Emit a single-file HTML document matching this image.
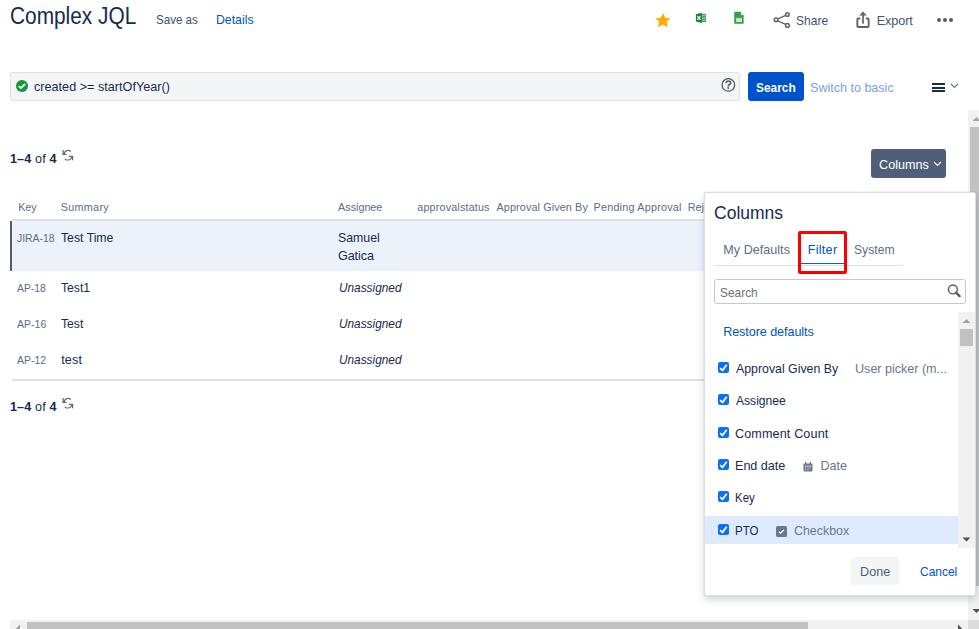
<!DOCTYPE html>
<html><head><meta charset="utf-8">
<style>
html,body{margin:0;padding:0;width:979px;height:629px;overflow:hidden;background:#fff;}
body{position:relative;font-family:"Liberation Sans",sans-serif;color:#172b4d;}
.a{position:absolute;}
.t{position:absolute;white-space:nowrap;}
svg{position:absolute;overflow:visible;}
</style></head><body>

<!-- ===== Header ===== -->

<!-- star -->
<svg style="left:655px;top:13px" width="16" height="15" viewBox="0 0 16 15"><path d="M8 0.8 L10.1 5.2 L14.9 5.6 L11.3 8.8 L12.4 13.6 L8 11.1 L3.6 13.6 L4.7 8.8 L1.1 5.6 L5.9 5.2 Z" fill="#ffab00" stroke="#ffab00" stroke-width="0.8" stroke-linejoin="round"/></svg>
<!-- excel -->
<svg style="left:690px;top:8px" width="22" height="20" viewBox="0 0 22 20"><rect x="11.6" y="5.9" width="4.4" height="8.2" fill="#3ea64c"/><rect x="12" y="7.2" width="3.5" height="0.9" fill="#b9e0bd"/><rect x="12" y="9.2" width="3.5" height="1.5" fill="#a5d6aa"/><rect x="12" y="11.8" width="3.5" height="0.9" fill="#b9e0bd"/><rect x="13.6" y="7" width="0.5" height="6" fill="#3ea64c"/><path d="M5.9 6.2 L11.9 4.8 L11.9 15 L5.9 13.6 Z" fill="#1f7d36"/><path d="M7.3 8.2 L10.4 11.8 M10.4 8.2 L7.3 11.8" stroke="#fff" stroke-width="1.2"/></svg>
<!-- sheets -->
<svg style="left:728px;top:8px" width="22" height="20" viewBox="0 0 22 20"><path d="M6.2 4.5 Q6.2 3.8 7 3.8 H12.4 L15.7 7.2 V15 Q15.7 15.7 15 15.7 H7 Q6.2 15.7 6.2 15 Z" fill="#34a04a"/><path d="M12.9 4.6 L15.1 6.9 L13.4 7.2 Q12.9 7.2 12.9 6.6 Z" fill="#e9f5eb"/><rect x="8.1" y="9.9" width="5.9" height="4.1" fill="#cde8d2"/><rect x="9.4" y="9.9" width="0.8" height="1.2" fill="#6fbb7d"/><rect x="11.8" y="9.9" width="0.8" height="1.2" fill="#6fbb7d"/></svg>

<!-- share -->
<svg style="left:774px;top:12px" width="17" height="17" viewBox="0 0 17 17"><circle cx="13.4" cy="2.5" r="1.85" fill="none" stroke="#646464" stroke-width="1.5"/><circle cx="2.1" cy="7.8" r="1.85" fill="none" stroke="#646464" stroke-width="1.5"/><circle cx="13.4" cy="13.4" r="1.85" fill="none" stroke="#646464" stroke-width="1.5"/><path d="M3.8 6.9 L11.7 3.4 M3.8 8.8 L11.7 12.4" stroke="#646464" stroke-width="1.4"/></svg>
<!-- export -->
<svg style="left:856px;top:11px" width="15" height="18" viewBox="0 0 15 18"><path d="M4.2 7.55 H2.35 Q1.35 7.55 1.35 8.55 V15 Q1.35 15.95 2.35 15.95 H11.65 Q12.65 15.95 12.65 15 V8.55 Q12.65 7.55 11.65 7.55 H9.9" fill="none" stroke="#646464" stroke-width="1.9"/><path d="M7 0.6 L10.9 4.6 H3.1 Z" fill="#646464"/><path d="M7 4 V12.8" stroke="#646464" stroke-width="1.7"/></svg>
<!-- dots -->
<svg style="left:936px;top:17px" width="18" height="6" viewBox="0 0 18 6"><circle cx="3" cy="3" r="2" fill="#5c5c5c"/><circle cx="9" cy="3" r="2" fill="#5c5c5c"/><circle cx="15" cy="3" r="2" fill="#5c5c5c"/></svg>

<!-- ===== JQL bar ===== -->
<div class="a" style="left:10px;top:72px;width:728px;height:27px;border:1px solid #dfe1e6;border-radius:3px;background:#f4f5f7;"></div>
<svg style="left:16px;top:80px" width="12" height="12" viewBox="0 0 12 12"><circle cx="6" cy="6" r="6.05" fill="#12993b"/><path d="M2.7 6.1 L4.9 8.1 L9.1 4" fill="none" stroke="#fff" stroke-width="1.8"/></svg>
<svg style="left:721px;top:77px" width="15" height="15" viewBox="0 0 15 15"><circle cx="7.35" cy="7.9" r="6.3" fill="none" stroke="#555a63" stroke-width="1.3"/><path d="M5.2 6.2 Q5.2 4 7.4 4 Q9.6 4 9.6 5.9 Q9.6 7.2 7.6 8 Q7.3 8.2 7.3 9.4" fill="none" stroke="#555a63" stroke-width="1.6"/><rect x="6.45" y="10.2" width="1.7" height="1.7" fill="#555a63"/></svg>

<div class="a" style="left:748px;top:72px;width:56px;height:29px;border-radius:3px;background:#0052cc;"></div>
<div class="a" style="left:931.5px;top:83px;width:13px;height:2px;background:#172b4d;"></div>
<div class="a" style="left:931.5px;top:86.5px;width:13px;height:2px;background:#172b4d;"></div>
<div class="a" style="left:931.5px;top:90px;width:13px;height:2px;background:#172b4d;"></div>
<svg style="left:950px;top:83px" width="9" height="6" viewBox="0 0 9 6"><path d="M1 1 L4.5 4.5 L8 1" fill="none" stroke="#6b778c" stroke-width="1.2"/></svg>

<!-- ===== count & columns ===== -->
<svg style="left:58px;top:146px" width="20" height="20" viewBox="0 0 20 20"><path d="M5.1 4.1 V8.4 H8.6 M6.1 7.9 C6.6 4.4 10.6 3.4 12.8 5.6 M10.8 10.3 H14.6 V14.3 M14 10.6 C13.6 14 9.6 14.8 7 13.2" fill="none" stroke="#66686d" stroke-width="1.2"/></svg>

<div class="a" style="left:871px;top:149px;width:75px;height:29px;border-radius:3px;background:#505f79;"></div>
<svg style="left:933px;top:160.5px" width="9" height="6" viewBox="0 0 9 6"><path d="M1 1 L4.5 4.5 L8 1" fill="none" stroke="#fff" stroke-width="1.1"/></svg>

<!-- ===== table ===== -->
<div class="a" style="left:12px;top:219px;width:956px;height:2px;background:#dfe1e6;"></div>

<div class="a" style="left:12px;top:221px;width:956px;height:50px;background:#ebf2fa;"></div>
<div class="a" style="left:10px;top:221px;width:2px;height:50px;background:#5c5c5c;"></div>




<div class="a" style="left:12px;top:379px;width:956px;height:2px;background:#dfe1e6;"></div>

<svg style="left:58px;top:394px" width="20" height="20" viewBox="0 0 20 20"><path d="M5.1 4.1 V8.4 H8.6 M6.1 7.9 C6.6 4.4 10.6 3.4 12.8 5.6 M10.8 10.3 H14.6 V14.3 M14 10.6 C13.6 14 9.6 14.8 7 13.2" fill="none" stroke="#66686d" stroke-width="1.2"/></svg>

<div class="t" style="left:9.73px;top:5px;font-size:23px;line-height:23px;transform:scaleX(0.9062);transform-origin:0 0;color:#172b4d;">Complex JQL</div>
<div class="t" style="left:156.45px;top:14px;font-size:12.6px;line-height:12.6px;transform:scaleX(0.9195);transform-origin:0 0;color:#42526e;">Save as</div>
<div class="t" style="left:215.96px;top:14px;font-size:12.6px;line-height:12.6px;transform:scaleX(0.975);transform-origin:0 0;color:#0052cc;">Details</div>
<div class="t" style="left:795.82px;top:15px;font-size:12.6px;line-height:12.6px;transform:scaleX(0.9548);transform-origin:0 0;color:#42526e;">Share</div>
<div class="t" style="left:876.75px;top:15px;font-size:12.6px;line-height:12.6px;letter-spacing:-0.064px;color:#42526e;">Export</div>
<div class="t" style="left:33.97px;top:81px;font-size:12.6px;line-height:12.6px;letter-spacing:0.026px;color:#172b4d;">created &gt;= startOfYear()</div>
<div class="t" style="left:755.98px;top:82px;font-size:12.8px;line-height:12.8px;transform:scaleX(0.9306);transform-origin:0 0;color:#fff;font-weight:bold;">Search</div>
<div class="t" style="left:810.1px;top:82px;font-size:12.6px;line-height:12.6px;letter-spacing:-0.029px;color:#7aa2e3;">Switch to basic</div>
<div class="t" style="left:9.88px;top:153px;font-size:12.6px;line-height:12.6px;letter-spacing:0.155px;color:#172b4d;"><b>1–4</b> of <b>4</b></div>
<div class="t" style="left:879.11px;top:159px;font-size:12.6px;line-height:12.6px;letter-spacing:-0.015px;color:#fff;">Columns</div>
<div class="t" style="left:18.19px;top:202px;font-size:10.8px;line-height:10.8px;letter-spacing:-0.089px;color:#5e6c84;">Key</div>
<div class="t" style="left:60.66px;top:202px;font-size:10.8px;line-height:10.8px;letter-spacing:0.308px;color:#5e6c84;">Summary</div>
<div class="t" style="left:338.11px;top:202px;font-size:10.8px;line-height:10.8px;letter-spacing:-0.027px;color:#5e6c84;">Assignee</div>
<div class="t" style="left:417.29px;top:202px;font-size:10.8px;line-height:10.8px;letter-spacing:0.153px;color:#5e6c84;">approvalstatus</div>
<div class="t" style="left:496.5px;top:202px;font-size:10.8px;line-height:10.8px;letter-spacing:0.119px;color:#5e6c84;">Approval Given By</div>
<div class="t" style="left:593.54px;top:202px;font-size:10.8px;line-height:10.8px;letter-spacing:0.218px;color:#5e6c84;">Pending Approval</div>
<div class="t" style="left:687.72px;top:202px;font-size:10.8px;line-height:10.8px;color:#5e6c84;">Rejected</div>
<div class="t" style="left:17.1px;top:233px;font-size:10.8px;line-height:10.8px;transform:scaleX(0.9641);transform-origin:0 0;color:#5e6c84;">JIRA-18</div>
<div class="t" style="left:61.43px;top:232px;font-size:12.6px;line-height:12.6px;transform:scaleX(0.9719);transform-origin:0 0;color:#172b4d;">Test Time</div>
<div class="t" style="left:337.9px;top:232px;font-size:12.6px;line-height:12.6px;transform:scaleX(0.9791);transform-origin:0 0;color:#172b4d;">Samuel</div>
<div class="t" style="left:338.01px;top:250px;font-size:12.6px;line-height:12.6px;letter-spacing:-0.096px;color:#172b4d;">Gatica</div>
<div class="t" style="left:17.36px;top:283px;font-size:10.8px;line-height:10.8px;transform:scaleX(0.9609);transform-origin:0 0;color:#5e6c84;">AP-18</div>
<div class="t" style="left:61.33px;top:282px;font-size:12.6px;line-height:12.6px;transform:scaleX(0.9633);transform-origin:0 0;color:#172b4d;">Test1</div>
<div class="t" style="left:338.5px;top:282px;font-size:12.6px;line-height:12.6px;transform:scaleX(0.9393);transform-origin:0 0;color:#172b4d;font-style:italic;">Unassigned</div>
<div class="t" style="left:17.43px;top:319px;font-size:10.8px;line-height:10.8px;transform:scaleX(0.9751);transform-origin:0 0;color:#5e6c84;">AP-16</div>
<div class="t" style="left:61.35px;top:318px;font-size:12.6px;line-height:12.6px;transform:scaleX(0.9668);transform-origin:0 0;color:#172b4d;">Test</div>
<div class="t" style="left:338.5px;top:318px;font-size:12.6px;line-height:12.6px;transform:scaleX(0.9393);transform-origin:0 0;color:#172b4d;font-style:italic;">Unassigned</div>
<div class="t" style="left:17.44px;top:355px;font-size:10.8px;line-height:10.8px;transform:scaleX(0.973);transform-origin:0 0;color:#5e6c84;">AP-12</div>
<div class="t" style="left:61.2px;top:354px;font-size:12.6px;line-height:12.6px;letter-spacing:0.143px;color:#172b4d;">test</div>
<div class="t" style="left:338.5px;top:354px;font-size:12.6px;line-height:12.6px;transform:scaleX(0.9393);transform-origin:0 0;color:#172b4d;font-style:italic;">Unassigned</div>
<div class="t" style="left:9.88px;top:401px;font-size:12.6px;line-height:12.6px;letter-spacing:0.155px;color:#172b4d;"><b>1–4</b> of <b>4</b></div>
<!-- ===== outer scrollbars ===== -->
<div class="a" style="left:968px;top:110px;width:17px;height:510px;background:#f1f1f1;"></div>
<svg style="left:968px;top:110px" width="17" height="17" viewBox="0 0 17 17"><path d="M4.5 11 L8.5 7 L12.5 11 Z" fill="#a3a3a3"/></svg>
<div class="a" style="left:970px;top:127px;width:13px;height:459px;background:#c1c1c1;"></div>
<svg style="left:968px;top:603px" width="17" height="17" viewBox="0 0 17 17"><path d="M4.5 6 L12.5 6 L8.5 10 Z" fill="#505050"/></svg>
<div class="a" style="left:10px;top:620px;width:958px;height:17px;background:#f1f1f1;"></div>
<svg style="left:10px;top:620px" width="17" height="17" viewBox="0 0 17 17"><path d="M10 4.5 L10 12.5 L6 8.5 Z" fill="#a3a3a3"/></svg>
<div class="a" style="left:27px;top:622px;width:781px;height:13px;background:#c1c1c1;"></div>
<svg style="left:951px;top:620px" width="17" height="17" viewBox="0 0 17 17"><path d="M7 4.5 L7 12.5 L11 8.5 Z" fill="#505050"/></svg>
<div class="a" style="left:968px;top:620px;width:17px;height:17px;background:#dcdcdc;"></div>

<!-- ===== popup ===== -->
<div class="a" style="left:704px;top:192px;width:270px;height:402px;background:#fff;border:1px solid #dcdfe4;border-radius:2px;box-shadow:0 4px 8px -1px rgba(9,30,66,0.22), 0 0 1px rgba(9,30,66,0.25);"></div>
<div class="a" style="left:714px;top:265px;width:189px;height:1px;background:#dfe1e6;"></div>
<div class="a" style="left:801px;top:263px;width:43px;height:1px;background:#0b5ed7;"></div>
<div class="a" style="left:798px;top:231px;width:43px;height:37px;border:3px solid #f00;border-radius:2px;"></div>

<div class="a" style="left:714px;top:279px;width:250px;height:23px;border:1px solid #c6c8cc;border-radius:3px;background:#fff;"></div>
<svg style="left:946px;top:284px" width="16" height="16" viewBox="0 0 16 16"><circle cx="6.9" cy="5.4" r="4.45" fill="none" stroke="#5a5a5a" stroke-width="1.45"/><path d="M10 8.6 L13.6 12.1" stroke="#5a5a5a" stroke-width="2.3" stroke-linecap="round"/></svg>


<div class="a" style="left:705px;top:516px;width:253px;height:28px;background:#deebff;"></div>

<!-- inner scrollbar -->
<div class="a" style="left:958px;top:312px;width:17px;height:236px;background:#f1f1f1;"></div>
<svg style="left:958px;top:312px" width="17" height="17" viewBox="0 0 17 17"><path d="M4.5 11 L8.5 7 L12.5 11 Z" fill="#a3a3a3"/></svg>
<div class="a" style="left:960px;top:329px;width:13px;height:17px;background:#c1c1c1;"></div>
<svg style="left:958px;top:531px" width="17" height="17" viewBox="0 0 17 17"><path d="M4.5 6.5 L12.5 6.5 L8.5 10.5 Z" fill="#505050"/></svg>

<!-- list -->
<div class="a" style="left:718px;top:362px;width:11px;height:11px;border-radius:2px;background:#0b70f6;"></div>
<svg style="left:718px;top:362px" width="11" height="11" viewBox="0 0 11 11"><path d="M2.1 6.1 L4.5 8.3 L8.7 2.8" fill="none" stroke="#fff" stroke-width="1.8"/></svg>
<div class="a" style="left:718px;top:394px;width:11px;height:11px;border-radius:2px;background:#0b70f6;"></div>
<svg style="left:718px;top:394px" width="11" height="11" viewBox="0 0 11 11"><path d="M2.1 6.1 L4.5 8.3 L8.7 2.8" fill="none" stroke="#fff" stroke-width="1.8"/></svg>
<div class="a" style="left:718px;top:427px;width:11px;height:11px;border-radius:2px;background:#0b70f6;"></div>
<svg style="left:718px;top:427px" width="11" height="11" viewBox="0 0 11 11"><path d="M2.1 6.1 L4.5 8.3 L8.7 2.8" fill="none" stroke="#fff" stroke-width="1.8"/></svg>
<div class="a" style="left:718px;top:459px;width:11px;height:11px;border-radius:2px;background:#0b70f6;"></div>
<svg style="left:718px;top:459px" width="11" height="11" viewBox="0 0 11 11"><path d="M2.1 6.1 L4.5 8.3 L8.7 2.8" fill="none" stroke="#fff" stroke-width="1.8"/></svg>
<svg style="left:803px;top:461.6px" width="10" height="10" viewBox="0 0 10 10"><rect x="0.5" y="1.5" width="9" height="8" rx="1" fill="#6b778c"/><rect x="2" y="0" width="1.3" height="2.5" fill="#6b778c"/><rect x="6.7" y="0" width="1.3" height="2.5" fill="#6b778c"/><path d="M1.5 4.2h7" stroke="#fff" stroke-width="0.6"/><rect x="2" y="5.5" width="1.2" height="1" fill="#c9ced6"/><rect x="4.4" y="5.5" width="1.2" height="1" fill="#c9ced6"/><rect x="6.8" y="5.5" width="1.2" height="1" fill="#c9ced6"/><rect x="2" y="7.3" width="1.2" height="1" fill="#c9ced6"/><rect x="4.4" y="7.3" width="1.2" height="1" fill="#c9ced6"/></svg>
<div class="a" style="left:718px;top:491px;width:11px;height:11px;border-radius:2px;background:#0b70f6;"></div>
<svg style="left:718px;top:491px" width="11" height="11" viewBox="0 0 11 11"><path d="M2.1 6.1 L4.5 8.3 L8.7 2.8" fill="none" stroke="#fff" stroke-width="1.8"/></svg>
<div class="a" style="left:718px;top:524px;width:11px;height:11px;border-radius:2px;background:#0b70f6;"></div>
<svg style="left:718px;top:524px" width="11" height="11" viewBox="0 0 11 11"><path d="M2.1 6.1 L4.5 8.3 L8.7 2.8" fill="none" stroke="#fff" stroke-width="1.8"/></svg>
<svg style="left:776px;top:525.6px" width="11" height="11" viewBox="0 0 11 11"><rect x="0" y="0" width="11" height="11" rx="1.5" fill="#6b778c"/><path d="M3 5.7 L4.6 7.2 L8 3.9" fill="none" stroke="#fff" stroke-width="1.3"/></svg>

<div class="a" style="left:851px;top:557px;width:48px;height:28px;border-radius:3px;background:#f4f5f7;"></div>

<div class="t" style="left:713.67px;top:204px;font-size:18px;line-height:18px;transform:scaleX(0.9728);transform-origin:0 0;color:#172b4d;">Columns</div>
<div class="t" style="left:723.34px;top:244px;font-size:12.6px;line-height:12.6px;letter-spacing:0.011px;color:#5e6c84;">My Defaults</div>
<div class="t" style="left:807.73px;top:244px;font-size:12.6px;line-height:12.6px;letter-spacing:0.274px;color:#0052cc;">Filter</div>
<div class="t" style="left:854.01px;top:244px;font-size:12.6px;line-height:12.6px;transform:scaleX(0.9656);transform-origin:0 0;color:#5e6c84;">System</div>
<div class="t" style="left:720.12px;top:287px;font-size:12.6px;line-height:12.6px;transform:scaleX(0.9451);transform-origin:0 0;color:#707070;">Search</div>
<div class="t" style="left:723.17px;top:326px;font-size:12.6px;line-height:12.6px;letter-spacing:-0.071px;color:#0052cc;">Restore defaults</div>
<div class="t" style="left:735.55px;top:363px;font-size:12.6px;line-height:12.6px;transform:scaleX(0.9791);transform-origin:0 0;color:#172b4d;">Approval Given By</div>
<div class="t" style="left:855.06px;top:363px;font-size:12.6px;line-height:12.6px;letter-spacing:-0.023px;color:#6b778c;">User picker (m...</div>
<div class="t" style="left:735.58px;top:395px;font-size:12.6px;line-height:12.6px;transform:scaleX(0.9599);transform-origin:0 0;color:#172b4d;">Assignee</div>
<div class="t" style="left:735.01px;top:428px;font-size:12.6px;line-height:12.6px;letter-spacing:0.131px;color:#172b4d;">Comment Count</div>
<div class="t" style="left:735.06px;top:460px;font-size:12.6px;line-height:12.6px;letter-spacing:-0.047px;color:#172b4d;">End date</div>
<div class="t" style="left:820.56px;top:460px;font-size:12.6px;line-height:12.6px;letter-spacing:-0.039px;color:#6b778c;">Date</div>
<div class="t" style="left:735.4px;top:492px;font-size:12.6px;line-height:12.6px;transform:scaleX(0.9114);transform-origin:0 0;color:#172b4d;">Key</div>
<div class="t" style="left:734.9px;top:525px;font-size:12.6px;line-height:12.6px;transform:scaleX(0.913);transform-origin:0 0;color:#172b4d;">PTO</div>
<div class="t" style="left:793.85px;top:525px;font-size:12.6px;line-height:12.6px;transform:scaleX(0.9853);transform-origin:0 0;color:#6b778c;">Checkbox</div>
<div class="t" style="left:859.98px;top:566px;font-size:12.6px;line-height:12.6px;letter-spacing:0.076px;color:#505f79;">Done</div>
<div class="t" style="left:919.55px;top:566px;font-size:12.6px;line-height:12.6px;transform:scaleX(0.9501);transform-origin:0 0;color:#0052cc;">Cancel</div>
</body></html>
